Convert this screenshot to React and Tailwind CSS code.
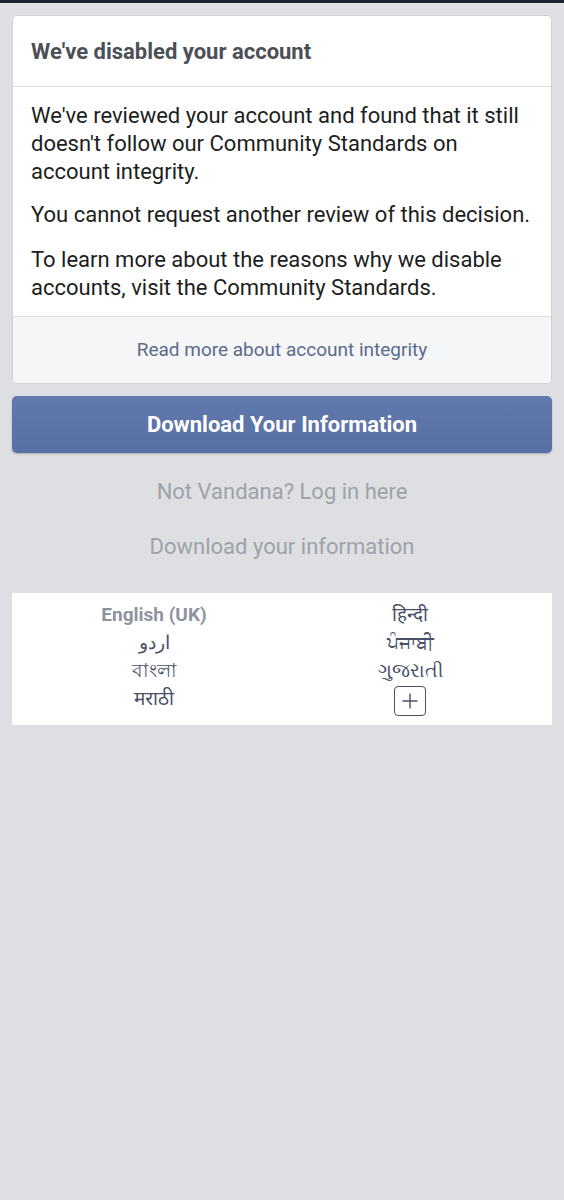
import React from "react";

export default function App() {
  const font = { fontFamily: "Roboto, 'Noto Sans', 'Noto Sans CJK SC', sans-serif" };
  const langs = [
    ["English (UK)", "हिन्दी"],
    ["اردو", "ਪੰਜਾਬੀ"],
    ["বাংলা", "ગુજરાતી"],
    ["मराठी", null],
  ];
  return (
    <div className="min-h-[1200px] w-[564px] bg-[#dddfe2]" style={font}>
      <div className="h-[3px] bg-[#1d2330]" />
      <div className="px-[12px] pt-[12px]">
        <div className="rounded-[5px] border border-[#cfd1d5] bg-white overflow-hidden">
          <div className="h-[71px] flex items-center px-[18px] border-b border-[#dadde1]">
            <span className="text-[22px] font-bold text-[#4b4f56]">We've disabled your account</span>
          </div>
          <div className="px-[18px] pt-[15px] pb-[14px] text-[22px] leading-[28px] text-[#1c1e21] border-b border-[#dadde1]">
            <p>We've reviewed your account and found that it still doesn't follow our Community Standards on account integrity.</p>
            <p className="mt-[15px]">You cannot request another review of this decision.</p>
            <p className="mt-[17px]">To learn more about the reasons why we disable accounts, visit the Community Standards.</p>
          </div>
          <div className="h-[66px] flex items-center justify-center bg-[#f5f6f7]">
            <span className="text-[19px] text-[#5b6b8a]">Read more about account integrity</span>
          </div>
        </div>
        <div className="mt-[12px] h-[57px] rounded-[5px] flex items-center justify-center bg-gradient-to-b from-[#6179ad] to-[#586fa3] shadow-[0_1px_2px_rgba(0,0,0,0.25)]">
          <span className="text-[22px] font-bold text-white">Download Your Information</span>
        </div>
        <div className="mt-[25px] text-center text-[22px] leading-[28px] text-[#9ea2a9]">Not Vandana? Log in here</div>
        <div className="mt-[27px] text-center text-[22px] leading-[28px] text-[#9ea2a9]">Download your information</div>
      </div>
      <div className="mx-[12px] mt-[32px] bg-white px-[14px] pt-[8px] pb-[9px] grid grid-cols-2 text-[19px] leading-[28px]">
        {langs.map(([a, b], i) => (
          <React.Fragment key={i}>
            <div className={"text-center " + (i === 0 ? "font-bold text-[#8d949e]" : "text-[#4a5068]")}>{a}</div>
            <div className="text-center text-[#4a5068]">
              {b ? (
                b
              ) : (
                <span className="inline-flex items-center justify-center w-[32px] h-[30px] mt-[1px] rounded-[4px] border border-[#4a5068] align-middle">
                  <svg width="18" height="18" viewBox="0 0 18 18" fill="none" stroke="#4a5068" strokeWidth="1.4">
                    <path d="M9 1.5v15M1.5 9h15" />
                  </svg>
                </span>
              )}
            </div>
          </React.Fragment>
        ))}
      </div>
    </div>
  );
}
